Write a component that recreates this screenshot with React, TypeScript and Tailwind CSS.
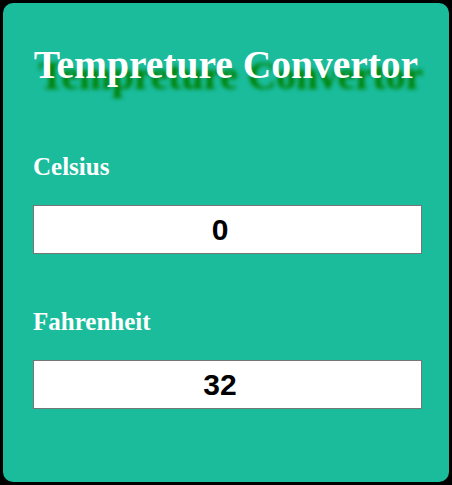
import { useState } from "react";

export default function App() {
  const [celsius, setCelsius] = useState("0");
  const [fahrenheit, setFahrenheit] = useState("32");

  const onCelsius = (v: string) => {
    setCelsius(v);
    const n = parseFloat(v);
    setFahrenheit(isNaN(n) ? "" : String(Math.round((n * 9) / 5 + 32)));
  };

  const onFahrenheit = (v: string) => {
    setFahrenheit(v);
    const n = parseFloat(v);
    setCelsius(isNaN(n) ? "" : String(Math.round(((n - 32) * 5) / 9)));
  };

  return (
    <div className="w-[452px] h-[485px] bg-black p-[3px]">
      <div className="h-[479px] w-[446px] rounded-[10px] bg-[#1abc9c] px-[30px] pt-[38px] font-['Liberation_Serif',serif]">
        <h1 className="-mx-[10px] whitespace-nowrap text-center text-[39.5px] font-bold leading-[48px] text-white [text-shadow:5px_11px_4px_#008000]">
          Tempreture Convertor
        </h1>

        <label className="mt-[64px] block text-[25px] font-bold leading-[28px] text-white">Celsius</label>
        <input
          type="number"
          value={celsius}
          onChange={(e) => onCelsius(e.target.value)}
          className="mt-[24px] block h-[49px] w-[389px] border border-[#767676] bg-white text-center font-['Liberation_Sans',Arial,sans-serif] text-[30px] font-bold text-black outline-none"
        />

        <label className="mt-[54px] block text-[25px] font-bold leading-[28px] text-white">Fahrenheit</label>
        <input
          type="number"
          value={fahrenheit}
          onChange={(e) => onFahrenheit(e.target.value)}
          className="mt-[24px] block h-[49px] w-[389px] border border-[#767676] bg-white text-center font-['Liberation_Sans',Arial,sans-serif] text-[30px] font-bold text-black outline-none"
        />
      </div>
    </div>
  );
}
